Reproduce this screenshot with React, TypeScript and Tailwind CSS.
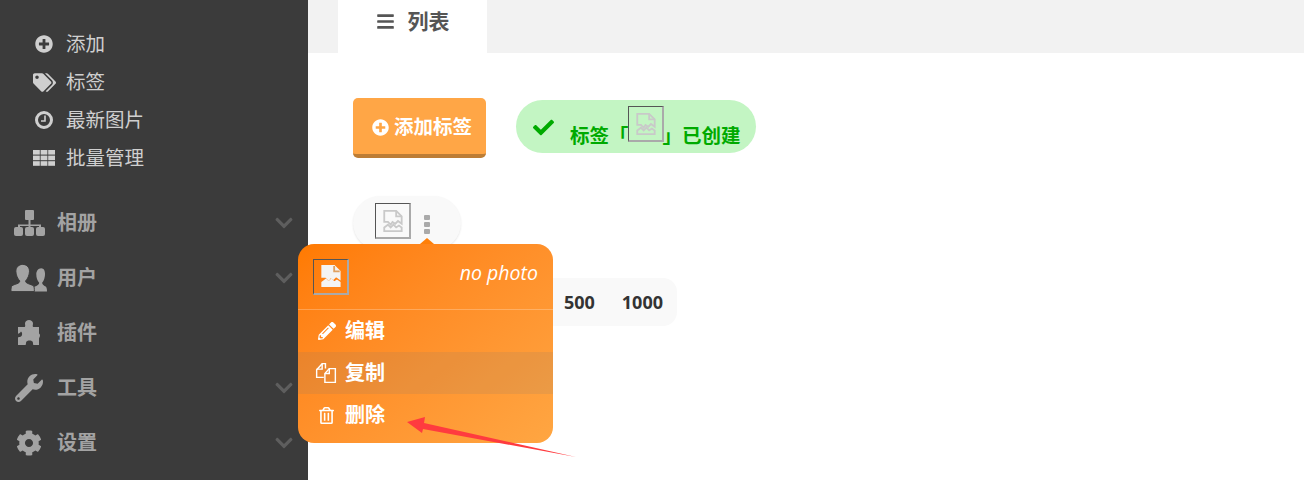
import type { ReactNode } from "react";
import {
  FaBars,
  FaCheck,
  FaChevronDown,
  FaCog,
  FaPencilAlt,
  FaPlusCircle,
  FaRegTrashAlt,
  FaTags,
  FaWrench,
} from "react-icons/fa";

function BrokenImage({ light }: { light?: boolean }) {
  const c = light ? "#f4f4f4" : "#c9c9c9";
  return (
    <span className="flex h-9 w-9 shrink-0 items-center justify-center border-2 border-t-1 border-l-1 border-t-[#555] border-l-[#555] border-r-[#aaa] border-b-[#aaa]">
      <svg viewBox="0 0 36 36" className="h-9 w-9" fill={light ? c : "none"} stroke={c} strokeWidth="2">
        <path d="M9 19V7h13l6 6v8l-4-3-3 3-3-2-2 3-3-3z" />
        <path d="M22 7v6h6" fill="none" stroke={light ? "#e0a060" : c} />
        <path d="M9 25l4-3 3 3 3-3 3 3 3-2 3 2v4H9z" />
      </svg>
    </span>
  );
}

function GroupIcon() {
  return (
    <svg viewBox="0 0 37 28" className="h-7 w-[37px]" fill="#a3a3a3">
      <path d="M24 28c-1-2-1-4 0-5 3-1 5-2 5-4-2-2-3-5-3-9 0-3 2-6 5-6s4 3 4 6c0 3-1 7-3 9 0 2 2 3 4 4 1 2 1 3 1 5z" />
      <path d="M0 28c0-3 0-5 1-6 3-2 8-2 8-5-2-2-4-6-4-10 0-4 3-7 7-7s7 3 7 7c0 4-2 8-4 10 0 3 5 3 8 5 1 1 1 3 1 6z" stroke="#3b3b3b" strokeWidth="1" />
    </svg>
  );
}

function CopyIcon() {
  return (
    <svg viewBox="0 0 20 20" className="h-[22px] w-[22px]" fill="none" stroke="white" strokeWidth="1.300">
      <path d="M8 14H1.500V7l5-5.500h3V6" />
      <path d="M6.500 1.500V6.500H1.500" />
      <path d="M9 18.500V10.500l4-4.500h5.500v12.500z" />
      <path d="M13 6v4.500H9" />
    </svg>
  );
}

function ClockIcon() {
  return (
    <svg viewBox="0 0 18 18" className="h-[18px] w-[18px]" fill="none" stroke="#cfcfcf">
      <circle cx="9" cy="9" r="7.500" strokeWidth="3" />
      <path d="M10 4.500V10H6" strokeWidth="1.600" />
    </svg>
  );
}

function GridIcon() {
  const cells = [0, 1, 2].flatMap((row) => [0, 1, 2].map((col) => [col, row]));
  return (
    <svg viewBox="0 0 22 16" className="h-4 w-[22px]" fill="#cfcfcf">
      {cells.map(([col, row]) => (
        <rect key={`${col}-${row}`} x={col * 7.6} y={row * 5.6} width="6.8" height="4.6" />
      ))}
    </svg>
  );
}

function SitemapIcon() {
  return (
    <svg viewBox="0 0 31 26" className="h-[26px] w-[31px]" fill="#a3a3a3">
      <rect x="11" y="0" width="9" height="10" rx="1" />
      <path d="M14.500 10h2v4.500H27V17h-2v-1h-8.500v1h-2v-1H6v1H4v-2.500h10.500z" />
      <rect x="0" y="17" width="9" height="9" rx="2" />
      <rect x="11" y="17" width="9" height="9" rx="2" />
      <rect x="22" y="17" width="9" height="9" rx="2" />
    </svg>
  );
}

function PuzzleIcon() {
  return (
    <svg viewBox="0 0 22 25" className="h-[25px] w-[22px]" fill="#a3a3a3">
      <path d="M0 7h6C8 7 7 5 7 3.500 7 1.500 9 0 11 0s4 1.500 4 3.500C15 5 14 7 16 7h5v6c0 1.500 1 .5 1 2.500 0 1.500-1 2-1 3.500v6h-5c-1.500 0-.5-2-1.500-3.500-1-1.500-5-1.500-6 0-1 1.500 0 3.500-1.500 3.500H0v-7c0-1.500 1.500-.5 3-1.500 1.500-1 1.500-4 0-5C1.500 13.500 0 14.500 0 13z" />
    </svg>
  );
}

const subItems: { label: string; icon: ReactNode }[] = [
  { label: "添加", icon: <FaPlusCircle className="text-[18px]" /> },
  { label: "标签", icon: <FaTags className="text-[23px]" /> },
  { label: "最新图片", icon: <ClockIcon /> },
  { label: "批量管理", icon: <GridIcon /> },
];

const mainItems: { label: string; icon: ReactNode; more: boolean }[] = [
  { label: "相册", icon: <SitemapIcon />, more: true },
  { label: "用户", icon: <GroupIcon />, more: true },
  { label: "插件", icon: <PuzzleIcon />, more: false },
  { label: "工具", icon: <FaWrench className="text-[28px]" />, more: true },
  { label: "设置", icon: <FaCog className="text-[26px]" />, more: true },
];

function Sidebar() {
  return (
    <aside className="h-[480px] w-[308px] shrink-0 bg-[#3b3b3b] pt-[25px]">
      <ul className="mb-[18px]">
        {subItems.map((item) => (
          <li key={item.label} className="flex h-[38px] items-center text-[19.500px] text-[#cfcfcf]">
            <span className="flex w-[66px] justify-center pl-[24px] pr-[2px]">{item.icon}</span>
            {item.label}
          </li>
        ))}
      </ul>
      <ul>
        {mainItems.map((item) => (
          <li key={item.label} className="flex h-[55px] items-center pl-[11px] text-[20px] font-bold text-[#a3a3a3]">
            <span className="flex w-[46px] justify-start pr-[8px]">
              <span className="flex w-[36px] justify-center">{item.icon}</span>
            </span>
            <span className="flex-1">{item.label}</span>
            {item.more && <FaChevronDown className="mr-[14px] text-[20px] text-[#5e5e5e]" />}
          </li>
        ))}
      </ul>
    </aside>
  );
}

function PhotoMenu() {
  return (
    <div className="absolute left-[-10px] top-[244px] h-[199px] w-[255px] overflow-hidden rounded-[16px] bg-gradient-to-br from-[#ff7a00] to-[#ffa642] text-white">
      <div className="flex h-[66px] items-center justify-between border-b border-white/25 px-[15px]">
        <BrokenImage light />
        <span className="mb-[8px] text-[19.500px] italic">no photo</span>
      </div>
      <ul className="text-[20px] font-bold">
        <li className="flex h-[42px] items-center pl-[20px]">
          <FaPencilAlt className="mr-[9px] text-[18px]" />
          编辑
        </li>
        <li className="flex h-[42px] items-center bg-[#777]/[0.15] pl-[17px]">
          <span className="mr-[8px]"><CopyIcon /></span>
          复制
        </li>
        <li className="flex h-[42px] items-center pl-[20px]">
          <FaRegTrashAlt className="mr-[10px] text-[17px]" />
          删除
        </li>
      </ul>
    </div>
  );
}

export default function App() {
  return (
    <div className="relative flex h-[480px] w-[1304px] overflow-hidden bg-white font-['Open_Sans','Noto_Sans_CJK_SC',sans-serif]">
      <Sidebar />
      <main className="relative flex-1">
        <div className="h-[53px] bg-[#f2f2f2] pl-[30px]">
          <div className="flex h-[53px] w-[149px] items-center justify-center gap-[13px] bg-white pb-[10px] text-[21px] font-bold text-[#555]">
            <FaBars className="text-[19px]" />
            列表
          </div>
        </div>

        <div className="pl-[45px]">
          <div className="mt-[45px] flex items-start gap-[30px]">
            <button className="flex h-[60px] w-[133px] items-center justify-center gap-[5px] rounded-[5px] border-b-[4px] border-[#bd7d35] bg-[#ffa646] pl-[5px] pt-[2px] text-[19.500px] font-bold text-white">
              <FaPlusCircle className="text-[17px]" />
              添加标签
            </button>
            <div className="mt-[2px] flex h-[53px] w-[240px] rounded-[27px] bg-[#c3f5c3] pl-[17px] text-[19.500px] font-bold text-[#00aa00]">
              <FaCheck className="mr-[16px] mt-[17px] text-[21px]" />
              <span className="mt-[21px]">标签「</span>
              <span className="ml-[-1px] mt-[6px] h-9 w-9"><BrokenImage /></span>
              <span className="ml-[-1px] mt-[21px]">」已创建</span>
            </div>
          </div>

          <div className="mt-[38px] flex h-[54px] w-[108px] items-start rounded-[27px] bg-[#f9f9f9] pl-[22px] pt-[7px] shadow-[0_1px_2px_rgba(0,0,0,0.1)]">
            <BrokenImage />
            <div className="ml-[13px] mt-[12px] flex flex-col gap-[2px]">
              <span className="h-[5px] w-[6px] rounded-[1px] bg-[#aaa]" />
              <span className="h-[5px] w-[6px] rounded-[1px] bg-[#aaa]" />
              <span className="h-[5px] w-[6px] rounded-[1px] bg-[#aaa]" />
            </div>
          </div>

          <div className="mt-[28px] flex h-[48px] w-[324px] items-center justify-end gap-[27px] rounded-[14px] bg-[#f9f9f9] pr-[14px] text-[18px] font-bold text-[#333]">
            <span>500</span>
            <span>1000</span>
          </div>
        </div>

        <span className="absolute left-[112px] top-[238px] h-0 w-0 border-x-[7px] border-b-[6px] border-x-transparent border-b-[#ff7f08]" />
        <PhotoMenu />
      </main>

      <svg className="absolute left-0 top-0" width="1304" height="480" fill="#ff3b3f">
        <polygon points="407,422 425,417 424,423 576,457 423,429 422,433" />
      </svg>
    </div>
  );
}
